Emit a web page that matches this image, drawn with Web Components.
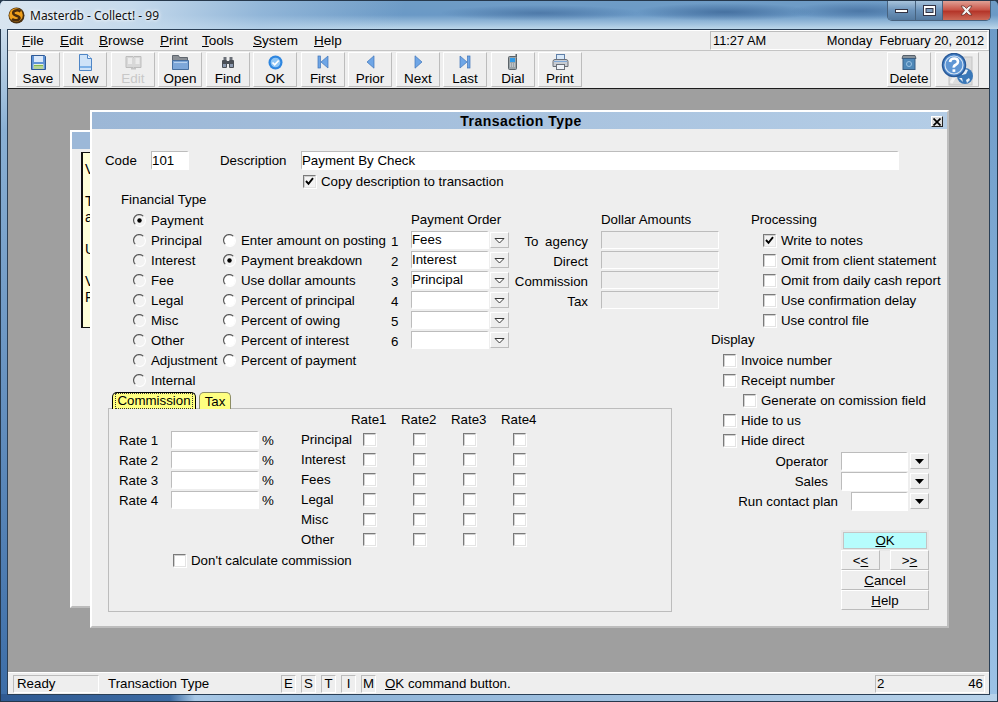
<!DOCTYPE html>
<html><head><meta charset="utf-8">
<style>
html,body{margin:0;padding:0;width:998px;height:702px;overflow:hidden;background:#26384c}
body{font:13.3px "Liberation Sans",Arial,sans-serif;color:#000}
</style></head><body>
<app-window>
  <app-menubar slot="menu"></app-menubar>
  <app-toolbar slot="tools"></app-toolbar>
  <mdi-area slot="mdi">
    <back-window></back-window>
    <txn-dialog></txn-dialog>
  </mdi-area>
  <app-status slot="status"></app-status>
</app-window>
<script>
const def=(name,css,html)=>{customElements.define(name,class extends HTMLElement{
  connectedCallback(){ if(this.shadowRoot)return; const r=this.attachShadow({mode:'open'});
    r.innerHTML='<style>'+css+'</style>'+(typeof html==='function'?html(this):html); }
});};
const ico={
save:`<svg width="17" height="17" viewBox="0 0 17 17"><path d="M1.500 1.500h13l1 1v13h-14z" fill="#5f93d6" stroke="#2f5a96"/><rect x="4" y="2" width="9" height="6" fill="#dbe9fa"/><rect x="3.500" y="10" width="10" height="5" fill="#e8f0d8"/><rect x="4" y="11" width="9" height="1.500" fill="#84b84c"/><rect x="4" y="13.500" width="9" height="1" fill="#84b84c"/></svg>`,
newf:`<svg width="15" height="17" viewBox="0 0 15 17"><path d="M1.500 .5h8l4 4v12h-12z" fill="#cfe3f8" stroke="#4f86c6"/><path d="M9.500 .5v4h4" fill="#eef6ff" stroke="#4f86c6"/><rect x="2" y="12" width="11" height="2" fill="#7eb2e8"/></svg>`,
edit:`<svg width="17" height="15" viewBox="0 0 17 15"><path d="M1 1.500h7l.5 1 .5-1h7v11h-7l-.5 1-.5-1h-7z" fill="#d8d8d8" stroke="#bdbdbd"/><path d="M3 4h4M3 6h4M3 8h4M10.500 4h4M10.500 6h4M10.500 8h4" stroke="#fff"/><rect x="6" y="13" width="5" height="1.500" fill="#c4c4c4"/></svg>`,
open:`<svg width="17" height="16" viewBox="0 0 17 16"><path d="M.5 1.500h6l1 2h8v3h-15z" fill="#8a8f95" stroke="#5f666e"/><path d="M.5 15.500v-9h16v9z" fill="#7da7d9" stroke="#476f9f"/><path d="M2 8h13v1h-13z" fill="#b8d2ef"/></svg>`,
find:`<svg width="14" height="13" viewBox="0 0 14 13" fill="#4a4f56"><rect x="1" y="4" width="5" height="8" rx="1"/><rect x="8" y="4" width="5" height="8" rx="1"/><rect x="2.500" y="1" width="3" height="3" fill="#6b7078"/><rect x="8.500" y="1" width="3" height="3" fill="#6b7078"/><rect x="6" y="5" width="2" height="3"/><rect x="2" y="8" width="3" height="3" fill="#8c9ab0"/><rect x="9" y="8" width="3" height="3" fill="#8c9ab0"/></svg>`,
ok:`<svg width="15" height="15" viewBox="0 0 15 15"><circle cx="7.500" cy="7.500" r="7" fill="#2e86e0"/><circle cx="7.500" cy="7.500" r="4.800" fill="#8fc6f5"/><path d="M4.500 7.500l2.200 2.300 4-4.300" fill="none" stroke="#fff" stroke-width="1.800"/></svg>`,
first:`<svg width="12" height="14" viewBox="0 0 12 14"><path d="M11 1v12L4 7z" fill="#6fa6e6" stroke="#3f74b8" stroke-width=".7"/><rect x="1" y="1" width="2.500" height="12" fill="#6fa6e6" stroke="#3f74b8" stroke-width=".7"/></svg>`,
prior:`<svg width="9" height="14" viewBox="0 0 9 14"><path d="M8 .8v12.400L1 7z" fill="#6fa6e6" stroke="#3f74b8" stroke-width=".7"/></svg>`,
next:`<svg width="9" height="14" viewBox="0 0 9 14"><path d="M1 .8v12.400L8 7z" fill="#6fa6e6" stroke="#3f74b8" stroke-width=".7"/></svg>`,
last:`<svg width="12" height="14" viewBox="0 0 12 14"><path d="M1 1v12l7-6z" fill="#6fa6e6" stroke="#3f74b8" stroke-width=".7"/><rect x="8.500" y="1" width="2.500" height="12" fill="#6fa6e6" stroke="#3f74b8" stroke-width=".7"/></svg>`,
dial:`<svg width="10" height="16" viewBox="0 0 10 16"><rect x=".5" y="2.500" width="8" height="13" rx="1" fill="#9aa3a8" stroke="#5b6368"/><rect x="7.500" y="0" width="1.500" height="3" fill="#5b6368"/><rect x="2" y="4" width="5" height="4" fill="#2f9ae8"/><path d="M2 10h1M4 10h1M6 10h1M2 12h1M4 12h1M6 12h1" stroke="#e0e4e8"/></svg>`,
print:`<svg width="17" height="16" viewBox="0 0 17 16"><rect x="4.500" y=".5" width="8" height="6" fill="#d8e8f8" stroke="#5f7fa8"/><path d="M1 7.500q0-2 2-2h11q2 0 2 2v5h-15z" fill="#c8ccd2" stroke="#6a6f78"/><rect x="4.500" y="10.500" width="8" height="5" fill="#eef2f8" stroke="#6a6f78"/><rect x="2" y="7" width="13" height="1" fill="#7fa8d8"/></svg>`,
del:`<svg width="16" height="16" viewBox="0 0 16 16"><path d="M2 1.500h12l1 3h-14z" fill="#8a949c" stroke="#56606a"/><rect x="2" y="4.500" width="12" height="11" fill="#4f88b8" stroke="#3a5f84"/><circle cx="8" cy="10" r="2.500" fill="none" stroke="#9cc4e4"/></svg>`,
help:`<svg width="33" height="33" viewBox="0 0 33 33"><rect x="8" y="4" width="23" height="28" fill="#dcdcdc" stroke="#c4c4c4"/><path d="M10 30l14-24" stroke="#f2f2f2" stroke-width="3"/><circle cx="24" cy="23" r="8" fill="#3a78b8"/><path d="M20 18q3-3 7-1l-2 4-4 1zM25 27l3-2 1 2-3 3zM18 25l3 0 1 4z" fill="#e8eef4"/><circle cx="13" cy="12" r="11.500" fill="#4a86cc" stroke="#2a5a98" stroke-width="1.500"/><circle cx="13" cy="12" r="9" fill="#5f96d4" stroke="#d4e4f4" stroke-width="1.200"/><path d="M9 9q.5-3.500 4.200-3.500t3.800 3.200q0 2-2.200 3t-2 3" fill="none" stroke="#fff" stroke-width="2.600"/><rect x="11.500" y="16.300" width="2.800" height="2.600" fill="#fff"/></svg>`
};
const FONT='font:13.3px "Liberation Sans",Arial,sans-serif;';
const SUNK='border:1px solid;border-color:#bcbcbc #fff #fff #bcbcbc;box-sizing:border-box;';

def('app-window',`:host{display:block;width:998px;height:702px;position:relative;overflow:hidden;border-radius:6px 6px 0 0;
 background:
  linear-gradient(90deg,#2f5a92 0,#3c6aa2 170px,#a8c8e6 195px,#8fb4d8 340px,#b7d2ea 100%) 0 694px/100% 8px no-repeat,
  linear-gradient(#dfeaf3 0,#8ab0d4 130px,#3d6ea8 694px) 0 0/8px 100% no-repeat,
  linear-gradient(#6b99c6 0,#9cc2e6 100%) 990px 0/8px 100% no-repeat;
 box-shadow:inset 0 0 0 1px #26384c}
.cap{height:29px;position:relative;box-sizing:border-box;padding:0 0 0 8px;display:flex;align-items:center;gap:5px;border-top:1px solid #26384c;
 background:
  radial-gradient(ellipse 70px 9px at 860px 10px,rgba(45,85,135,.5),transparent),
  radial-gradient(ellipse 90px 9px at 725px 11px,rgba(40,80,130,.55),transparent),
  radial-gradient(ellipse 100px 8px at 540px 12px,rgba(50,90,140,.5),transparent),
  linear-gradient(100deg,#d9e5f0 0,#c6daec 130px,rgba(170,200,228,.6) 260px,rgba(140,180,215,0) 400px),
  linear-gradient(#6f9cc6 0,#6a99c6 14px,#bcd7ea 28px)}
.t{font:12px "Noto Sans",sans-serif;color:#111;text-shadow:0 0 5px #fff,0 0 3px #fff}
.btns{position:absolute;right:7px;top:0;width:104px;height:20px;display:flex;border:1px solid #47627e;border-top:0;border-radius:0 0 5px 5px;box-sizing:border-box;overflow:hidden}
.btns i{display:flex;align-items:center;justify-content:center;height:19px;box-sizing:border-box;border-right:1px solid #47627e;background:linear-gradient(#a7c3dc,#6c93ba 50%,#54799f)}
.btns i:nth-child(1){width:28px}.btns i:nth-child(2){width:27px}
.btns i:nth-child(3){flex:1;border:0;background:linear-gradient(#e0a195,#c9574a 45%,#b5362a 55%,#cc6a58)}
.client{position:absolute;left:7px;top:29px;width:983px;height:666px;border:1px solid #2a3f56;box-sizing:border-box;background:#eee;display:flex;flex-direction:column}
`,()=>`<div class="cap">
<svg width="17" height="17" viewBox="0 0 17 17"><circle cx="8.500" cy="8.500" r="8" fill="#4a3010"/><circle cx="8" cy="8" r="6.800" fill="#f0a01c"/><path d="M12.500 4.500C9 2 4 4 5.500 7c1 2 6 1.500 6 4 0 2.500-5 3-7.500 1" fill="none" stroke="#4a2c0c" stroke-width="2.600"/></svg>
<span class="t">Masterdb - Collect! - 99</span>
<div class="btns"><i><svg width="13" height="5"><rect x=".5" y="1.500" width="12" height="3" fill="#fff" stroke="#334"/></svg></i><i><svg width="13" height="11"><rect x=".5" y=".5" width="12" height="10" fill="#fff" stroke="#334"/><rect x="3" y="3.500" width="7" height="4" fill="#7d9dbf" stroke="#334"/></svg></i><i><svg width="15" height="11" viewBox="0 0 15 11"><path d="M2 1h3l2.500 2.500L10 1h3L9.500 5.500 13 10h-3L7.500 7.500 5 10H2l3.500-4.500z" fill="#f4f4f4" stroke="#5a2a24" stroke-width=".7"/></svg></i></div>
</div>
<div class="client"><slot name="menu"></slot><slot name="tools"></slot><slot name="mdi"></slot><slot name="status"></slot></div>`);

def('app-menubar',`:host{display:flex;height:21px;flex:none;box-sizing:border-box;align-items:center;background:#eee;border-top:1px solid #fff;border-bottom:1px solid #c4c4c4;font:13.500px "Liberation Sans",Arial,sans-serif;position:relative}
.m{display:grid;grid-template-columns:38px 39px 61px 42px 51px 61px auto;padding-left:14px;flex:none;width:702px;box-sizing:border-box}
u{text-underline-offset:1px}
.clk{height:19px;flex:none;width:278px;${SUNK}display:flex;justify-content:space-between;align-items:center;padding:0 3px 0 2px;white-space:pre;font-size:12.800px}
`,`<div class="m"><span><u>F</u>ile</span><span><u>E</u>dit</span><span><u>B</u>rowse</span><span><u>P</u>rint</span><span><u>T</u>ools</span><span><u>S</u>ystem</span><span><u>H</u>elp</span></div><div class="clk"><span>11:27 AM</span><span>Monday  February 20, 2012</span></div>`);

def('tool-btn',`:host{display:flex;flex-direction:column;align-items:center;width:44px;height:35px;box-sizing:border-box;background:#eee;border:1px solid;border-color:#fff #bcbcbc #bcbcbc #fff;font:13.500px "Liberation Sans",Arial,sans-serif;flex:none;overflow:hidden}
.i{height:18px;display:flex;align-items:center;justify-content:center;width:100%;flex:none;margin-top:0}
.l{line-height:15px}
:host([disabled]) .l{color:#c8c8c8}
:host([big]) .i{height:33px;margin:0}
`,(h)=>`<div class="i">${ico[h.getAttribute('icon')]}</div>${h.getAttribute('label')?`<div class="l">${h.getAttribute('label')}</div>`:''}`);

def('app-toolbar',`:host{display:flex;height:38px;flex:none;box-sizing:border-box;background:#eee;border-bottom:1px solid #1c1c1c;padding:1px 0 0 8px}
.g{display:flex;flex:1}
.a{width:3px;flex:none}.b{width:4px;flex:none}
.r{display:flex;gap:4px;padding-right:10px}
`,`<div class="g">
<tool-btn icon="save" label="Save"></tool-btn><span class="a"></span>
<tool-btn icon="newf" label="New"></tool-btn><span class="b"></span>
<tool-btn icon="edit" label="Edit" disabled></tool-btn><span class="a"></span>
<tool-btn icon="open" label="Open"></tool-btn><span class="b"></span>
<tool-btn icon="find" label="Find"></tool-btn><span class="a"></span>
<tool-btn icon="ok" label="OK"></tool-btn><span class="b"></span>
<tool-btn icon="first" label="First"></tool-btn><span class="a"></span>
<tool-btn icon="prior" label="Prior"></tool-btn><span class="b"></span>
<tool-btn icon="next" label="Next"></tool-btn><span class="a"></span>
<tool-btn icon="last" label="Last"></tool-btn><span class="b"></span>
<tool-btn icon="dial" label="Dial"></tool-btn><span class="a"></span>
<tool-btn icon="print" label="Print"></tool-btn>
</div><div class="r"><tool-btn icon="del" label="Delete"></tool-btn><tool-btn icon="help" big></tool-btn></div>`);

def('mdi-area',`:host{display:block;flex:1;background:#9f9f9f;position:relative;overflow:hidden}`,`<slot></slot>`);

def('back-window',`:host{position:absolute;left:62px;top:41px;width:40px;height:478px;background:#eee;border:2px solid;border-color:#fff #999 #bbb #fff;box-sizing:border-box;${FONT}font-size:14px}
.bar{height:17px;background:#9cb8d8}
.note{position:absolute;left:9px;top:20px;width:40px;height:176px;background:#ffffd8;border:1px solid #111;border-left-width:2px;border-right:0;box-sizing:border-box;padding:8px 0 0 2px;line-height:16px;overflow:hidden;white-space:pre}
`,`<div class="bar"></div><div class="note">V

T
a

U

V
P</div>`);

/* small form controls */
def('x-h',`:host{display:block;height:20px;line-height:20px;white-space:nowrap}`,`<slot></slot>`);
def('x-check',`:host{display:flex;align-items:center;height:20px;white-space:nowrap}
.b{width:13px;height:13px;flex:none;margin-right:5px;box-sizing:border-box;background:#fff;border:1px solid;border-color:#7a7a7a #e4e4e4 #e4e4e4 #7a7a7a;box-shadow:inset 1px 1px 0 #d0d0d0,1px 1px 0 #fff;display:flex;align-items:center;justify-content:center}
:host([checked]) .b{background:#f4f4f4}
`,(h)=>`<span class="b">${h.hasAttribute('checked')?'<svg width="9" height="9" viewBox="0 0 9 9"><path d="M1 4l2.500 2.800L8 1.200" fill="none" stroke="#000" stroke-width="1.900"/></svg>':''}</span><slot></slot>`);
def('x-radio',`:host{display:flex;align-items:center;height:20px;white-space:nowrap}
svg{flex:none;margin-right:5px}
`,(h)=>`<svg width="13" height="13" viewBox="0 0 13 13"><circle cx="6.500" cy="6.500" r="5.500" fill="${h.hasAttribute('white')?'#fff':'#f2f2f2'}"/><path d="M2.200 10.200A5.500 5.500 0 0 1 10.200 2.200" fill="none" stroke="#5a5a5a" stroke-width="1.200"/><path d="M10.800 2.800A5.500 5.500 0 0 1 2.800 10.800" fill="none" stroke="#fff" stroke-width="1.100"/>${h.hasAttribute('checked')?'<circle cx="6.500" cy="6.500" r="2.200" fill="#000"/>':''}</svg><slot></slot>`);
def('x-field',`:host{display:flex;align-items:center;flex:none;${SUNK}border-width:1px 2px 2px 1px;background:#fff;white-space:nowrap;overflow:hidden}
:host([off]){background:#eee;border-width:1px}
`,(h)=>{const w=h.getAttribute('w'),t=h.getAttribute('t')||18;h.style.width=w+'px';h.style.height=t+'px';return '<slot></slot>';});
def('x-combo',`:host{display:flex;align-items:center;gap:1px;flex:none}
:host([solid]){gap:2px}
b{display:flex;align-items:center;justify-content:center;width:19px;height:16px;box-sizing:border-box;border:1px solid;border-color:#fff #bcbcbc #bcbcbc #fff;background:#eee}
`,(h)=>`<x-field w="${h.getAttribute('w')}" t="${h.getAttribute('t')||18}"><slot></slot></x-field><b><svg width="11" height="7" viewBox="0 0 11 7">${h.hasAttribute('solid')?'<path d="M1 1h9L5.500 6z" fill="#000"/>':'<path d="M1 1.500h9L5.500 6z" fill="#fff" stroke="#222" stroke-width=".9"/>'}</svg></b>`);
def('x-btn',`:host{display:flex;align-items:center;justify-content:center;height:20px;box-sizing:border-box;border:1px solid;border-color:#fff #bcbcbc #bcbcbc #fff;background:#eee;white-space:nowrap}
:host([def]){background:#b6fdfd;border:1px solid #c4c4c4;box-shadow:0 0 0 2px #e8e8e8;margin:1px 2px 1px;height:17px}
`,`<slot></slot>`);

def('commission-tabs',`:host{display:block;margin:2px 0 0 16px;width:564px;${FONT}}
.tabs{display:flex;height:17px;padding-left:4px;gap:3px;position:relative;z-index:1;margin-bottom:-1px}
.tab{box-sizing:border-box;height:17px;border-radius:5px 5px 0 0;background:#ffff80;border:1px solid #8c8c64;border-bottom:0;display:flex;align-items:center;justify-content:center}
.on{width:84px;border:1.500px solid #000;border-bottom:0}
.on span{outline:1px dotted #333;outline-offset:0;padding:0 1px;line-height:14px}
.tx{width:32px}
.panel{height:204px;box-sizing:border-box;border:1px solid #bcbcbc;display:flex;flex-direction:column}
.rates{display:flex;height:140px;flex:none}
.lf{width:192px;flex:none;box-sizing:border-box;padding:21px 0 0 10px}
.rr{display:flex;align-items:center;height:20px}
.rr span:first-child{width:52px;margin-top:1px}
.rr i{font-style:normal;margin-left:3px}
.gr{display:grid;grid-template-columns:repeat(5,50px);grid-auto-rows:20px;align-items:center;white-space:nowrap}
.gr x-check{margin:1px 0 0 12px}
.dc{margin:1px 0 0 64px}
`,()=>{
 const names=['Principal','Interest','Fees','Legal','Misc','Other'];
 let g='<span></span><span>Rate1</span><span>Rate2</span><span>Rate3</span><span>Rate4</span>';
 names.forEach(n=>{g+=`<span>${n}</span>`+'<x-check></x-check>'.repeat(4)});
 let l='';[1,2,3,4].forEach(i=>{l+=`<div class="rr"><span>Rate ${i}</span><x-field w="88"></x-field><i>%</i></div>`});
 return `<div class="tabs"><div class="tab on"><span>Commission</span></div><div class="tab tx">Tax</div></div>
 <div class="panel"><div class="rates"><div class="lf">${l}</div><div class="gr">${g}</div></div><div class="dc"><x-check>Don't calculate commission</x-check></div></div>`;});

def('txn-dialog',`:host{position:absolute;left:82px;top:21px;width:859px;height:518px;box-sizing:border-box;background:#eee;border:2px solid;border-color:#fff #bdbdbd #bdbdbd #fff;display:flex;flex-direction:column;${FONT}}
.title{height:17px;flex:none;background:linear-gradient(90deg,#9cb7d6,#b4cde6);display:flex;justify-content:center;align-items:center;font:bold 14px "Liberation Sans",Arial,sans-serif;letter-spacing:.45px;position:relative;padding-left:3px}
.x{position:absolute;right:4px;top:4px;width:12px;height:11px;box-sizing:border-box;background:#ddd;border:1px solid;border-color:#fff #222 #222 #fff;display:flex;align-items:center;justify-content:center}
.top{display:flex;align-items:center;height:19px;margin:22px 0 0 13px;flex:none}
.copy{margin:1px 0 0 211px;flex:none}
.main{display:flex;margin-top:-1px;flex:1}
.left{width:627px;flex:none;display:flex;flex-direction:column}
.cols{display:flex;height:200px;flex:none}
.col1{width:102px;margin-left:29px;flex:none}
.pad12{padding-left:12px}
.col2{width:168px;padding-top:40px;flex:none;box-sizing:border-box}
.col3{flex:none;width:118px;padding-top:20px}
.ord{display:grid;grid-template-columns:20px 98px;grid-auto-rows:20px;align-items:center}
.ord x-h{grid-column:2}
.n{margin-top:2px}
.col4{flex:none;width:210px;padding-top:20px}
.amt{display:grid;grid-template-columns:79px 118px;column-gap:13px;grid-auto-rows:20px;align-items:center;white-space:nowrap}
.amt x-h{grid-column:2}
.amt span{text-align:right;margin-top:2px}
.right{flex:1;display:flex;flex-direction:column;padding-top:20px}
.proc{margin-left:32px}
.sub{padding-left:12px}
.disp{margin-left:-8px}
.sel{display:flex;align-items:center;justify-content:flex-end;height:20px;padding-right:18px;white-space:nowrap}
.sel span{margin-right:13px}
.stack{margin:20px 0 0 122px;width:88px;display:flex;flex-direction:column}
.pair{display:flex;justify-content:space-between}
.pair x-btn{width:39px}
u{text-underline-offset:1px}
`,`<div class="title">Transaction Type<span class="x"><svg width="8" height="8" viewBox="0 0 8 8"><path d="M.5.5l7 7M7.500.5l-7 7" stroke="#000" stroke-width="1.700"/></svg></span></div>
<div class="top"><span style="width:46px">Code</span><x-field w="38" t="19">101</x-field><span style="width:81px;margin-left:31px">Description</span><x-field w="598" t="19">Payment By Check</x-field></div>
<div class="copy"><x-check checked>Copy description to transaction</x-check></div>
<div class="main">
 <div class="left">
  <div class="cols">
   <div class="col1"><x-h>Financial Type</x-h><div class="pad12">
    <x-radio checked>Payment</x-radio><x-radio>Principal</x-radio><x-radio>Interest</x-radio><x-radio>Fee</x-radio><x-radio>Legal</x-radio><x-radio>Misc</x-radio><x-radio>Other</x-radio><x-radio>Adjustment</x-radio><x-radio>Internal</x-radio></div></div>
   <div class="col2"><x-radio white>Enter amount on posting</x-radio><x-radio checked>Payment breakdown</x-radio><x-radio white>Use dollar amounts</x-radio><x-radio white>Percent of principal</x-radio><x-radio white>Percent of owing</x-radio><x-radio white>Percent of interest</x-radio><x-radio white>Percent of payment</x-radio></div>
   <div class="col3"><div class="ord"><x-h>Payment Order</x-h>
    <span class="n">1</span><x-combo w="78">Fees</x-combo>
    <span class="n">2</span><x-combo w="78">Interest</x-combo>
    <span class="n">3</span><x-combo w="78">Principal</x-combo>
    <span class="n">4</span><x-combo w="78"></x-combo>
    <span class="n">5</span><x-combo w="78"></x-combo>
    <span class="n">6</span><x-combo w="78"></x-combo></div></div>
   <div class="col4"><div class="amt"><x-h>Dollar Amounts</x-h>
    <span style="word-spacing:3px">To agency</span><x-field off w="118"></x-field>
    <span>Direct</span><x-field off w="118"></x-field>
    <span>Commission</span><x-field off w="118"></x-field>
    <span>Tax</span><x-field off w="118"></x-field></div></div>
  </div>
  <commission-tabs></commission-tabs>
 </div>
 <div class="right">
  <div class="proc"><x-h>Processing</x-h><div class="sub"><x-check checked>Write to notes</x-check><x-check>Omit from client statement</x-check><x-check>Omit from daily cash report</x-check><x-check>Use confirmation delay</x-check><x-check>Use control file</x-check></div></div>
  <div class="disp"><x-h>Display</x-h><div class="sub"><x-check>Invoice number</x-check><x-check>Receipt number</x-check><div style="padding-left:20px"><x-check>Generate on comission field</x-check></div><x-check>Hide to us</x-check><x-check>Hide direct</x-check></div></div>
  <div style="height:1px;flex:none"></div>
  <div class="sel"><span>Operator</span><x-combo w="67" t="19" solid></x-combo></div>
  <div class="sel"><span>Sales</span><x-combo w="67" t="19" solid></x-combo></div>
  <div class="sel"><span>Run contact plan</span><x-combo w="57" t="19" solid></x-combo></div>
  <div class="stack"><x-btn def><span><u>O</u>K</span></x-btn><div class="pair"><x-btn><span>&lt;<u>&lt;</u></span></x-btn><x-btn><span>&gt;<u>&gt;</u></span></x-btn></div><x-btn><span><u>C</u>ancel</span></x-btn><x-btn><span><u>H</u>elp</span></x-btn></div>
 </div>
</div>`);

def('app-status',`:host{display:flex;align-items:center;height:22px;flex:none;box-sizing:border-box;background:#eee;border-top:1px solid #fff;padding:0 4px 0 5px;${FONT}white-space:nowrap}
.b{${SUNK}height:18px;display:flex;align-items:center}
.rd{width:86px;padding-left:3px}
.tt{width:173px;margin-left:9px}
.f{${SUNK}width:15px;height:18px;margin-right:5px;display:flex;align-items:center;justify-content:center}
.msg{flex:1;margin-left:4px}
.rt{width:110px;justify-content:space-between;padding:0 1px 0 1px}
u{text-underline-offset:1px}
`,`<div class="b rd">Ready</div><div class="tt">Transaction Type</div><div class="f">E</div><div class="f">S</div><div class="f">T</div><div class="f">I</div><div class="f">M</div><div class="msg"><u>O</u>K command button.</div><div class="b rt"><span>2</span><span>46</span></div>`);
</script></body></html>
